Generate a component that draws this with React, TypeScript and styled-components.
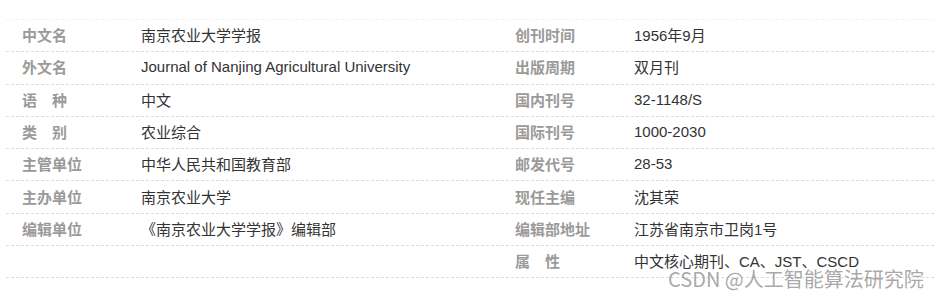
import React from "react";
import styled, { createGlobalStyle } from "styled-components";

const Global = createGlobalStyle`
  html, body { margin: 0; padding: 0; background: #fff; }
  body { font-family: "Liberation Sans", "Noto Sans CJK SC", sans-serif; }
`;

const Page = styled.div`
  position: relative;
  width: 934px;
  height: 298px;
  padding: 19px 0 0 6px;
  box-sizing: border-box;
  overflow: hidden;
`;

const Table = styled.div`
  width: 928px;
  border-top: 1px dashed #f2f2f2;
`;

const Row = styled.div`
  display: grid;
  grid-template-columns: 119px 374px 119px 1fr;
  align-items: center;
  height: 29.3px;
  background-image: repeating-linear-gradient(
    to right,
    #dcdcdc 0,
    #dcdcdc 3px,
    transparent 3px,
    transparent 5px
  );
  background-size: 100% 1px;
  background-repeat: no-repeat;
  background-position: left bottom;
  padding-bottom: 3px;
`;

const Label = styled.div`
  padding-left: 16px;
  font-size: 15px;
  font-weight: bold;
  color: #9a9a9a;
  white-space: pre;
`;

const Value = styled.div`
  padding-left: 16px;
  font-size: 15px;
  color: #333;
  white-space: nowrap;
`;

const Watermark = styled.div`
  position: absolute;
  left: 668px;
  top: 265px;
  font-family: "Noto Sans CJK SC", sans-serif;
  font-size: 20px;
  line-height: 28px;
  color: rgba(130, 130, 130, 0.7);
  white-space: nowrap;
`;

const rows: [string, string, string, string][] = [
  ["中文名", "南京农业大学学报", "创刊时间", "1956年9月"],
  ["外文名", "Journal of Nanjing Agricultural University", "出版周期", "双月刊"],
  ["语　种", "中文", "国内刊号", "32-1148/S"],
  ["类　别", "农业综合", "国际刊号", "1000-2030"],
  ["主管单位", "中华人民共和国教育部", "邮发代号", "28-53"],
  ["主办单位", "南京农业大学", "现任主编", "沈其荣"],
  ["编辑单位", "《南京农业大学学报》编辑部", "编辑部地址", "江苏省南京市卫岗1号"],
  ["", "", "属　性", "中文核心期刊、CA、JST、CSCD"],
];

export default function App() {
  return (
    <Page>
      <Global />
      <Table>
        {rows.map((r, i) => (
          <Row key={i}>
            <Label>{r[0]}</Label>
            <Value>{r[1]}</Value>
            <Label>{r[2]}</Label>
            <Value>{r[3]}</Value>
          </Row>
        ))}
      </Table>
      <Watermark>CSDN @人工智能算法研究院</Watermark>
    </Page>
  );
}
